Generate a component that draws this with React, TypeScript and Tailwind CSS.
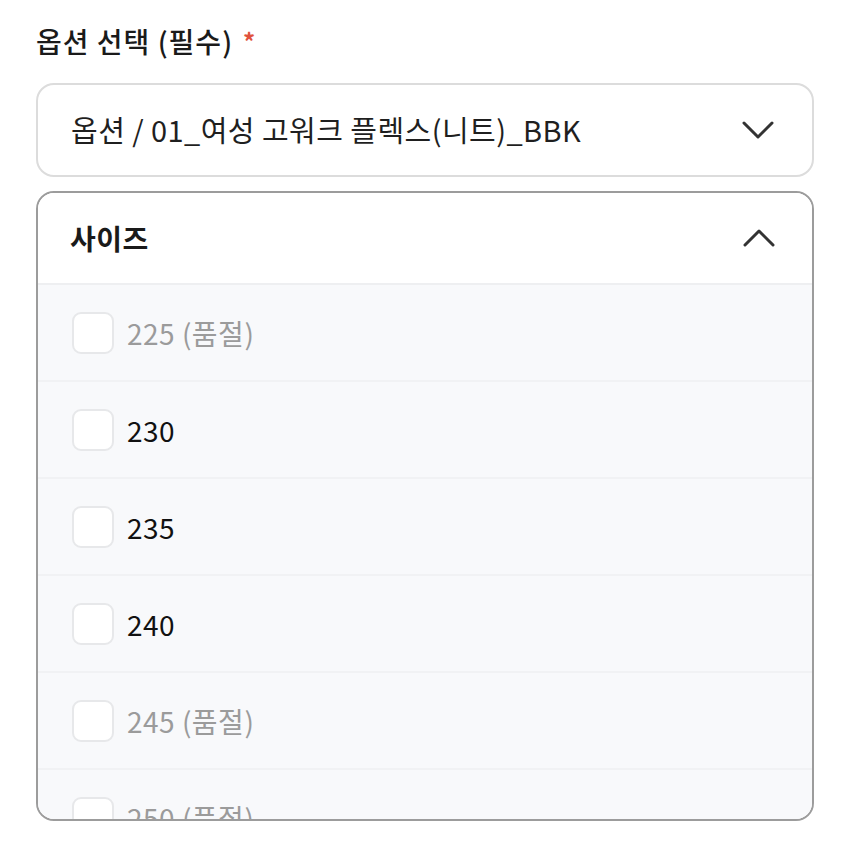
import React from "react";

const font = { fontFamily: '"Noto Sans CJK KR", "Noto Sans", sans-serif' };

const rows = [
  { label: "225 (품절)", soldOut: true },
  { label: "230", soldOut: false },
  { label: "235", soldOut: false },
  { label: "240", soldOut: false },
  { label: "245 (품절)", soldOut: true },
  { label: "250 (품절)", soldOut: true },
];

function Chevron({ up }: { up?: boolean }) {
  return (
    <svg width="32" height="18" viewBox="0 0 32 18" fill="none">
      <polyline
        points={up ? "2,16 16,2 30,16" : "2,2 16,16 30,2"}
        stroke="#333"
        strokeWidth="3"
        strokeLinecap="round"
        strokeLinejoin="round"
      />
    </svg>
  );
}

export default function App() {
  return (
    <div className="w-[850px] h-[843px] bg-white overflow-hidden" style={font}>
      <div className="pt-[21px] px-[36px]">
        <div className="flex items-center h-[40px] text-[28px] font-medium text-[#1a1a1a] tracking-[1px]">
          옵션 선택 (필수)
          <span className="ml-[10px] text-[24px] text-[#e0523d] font-bold leading-none">*</span>
        </div>
        <div className="mt-[22px] h-[94px] rounded-[18px] border-2 border-[#dcdcdc] flex items-center justify-between pl-[33px] pr-[38px]">
          <span className="text-[29px] text-[#1f1f1f] tracking-[0.45px]">옵션 / 01_여성 고워크 플렉스(니트)_BBK</span>
          <Chevron />
        </div>
        <div className="mt-[14px] h-[630px] rounded-[18px] border-2 border-[#9c9c9c] overflow-hidden flex flex-col">
          <div className="h-[92px] shrink-0 flex items-center justify-between pl-[32px] pr-[37px] bg-white border-b-2 border-[#eeeff1]">
            <span className="text-[28px] font-bold text-[#1a1a1a] tracking-[0.5px]">사이즈</span>
            <Chevron up />
          </div>
          <div className="bg-[#f8f9fb] flex-1">
            {rows.map((r) => (
              <div key={r.label} className="h-[97px] shrink-0 flex items-center pl-[34px] border-b-2 border-[#f1f2f4]">
                <div className="w-[42px] h-[42px] rounded-[9px] border-2 border-[#e7e8ea] bg-white" />
                <span className={`ml-[13px] text-[28px] tracking-[0.5px] ${r.soldOut ? "text-[#9b9b9b]" : "text-[#111]"}`}>{r.label}</span>
              </div>
            ))}
          </div>
        </div>
      </div>
    </div>
  );
}
